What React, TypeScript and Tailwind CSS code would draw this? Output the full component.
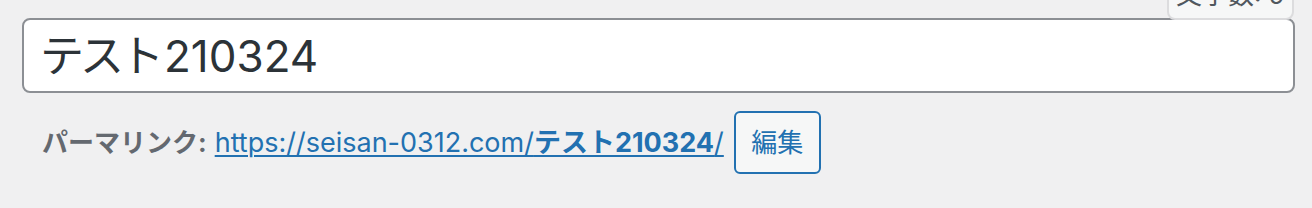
import React from 'react';

const App: React.FC = () => {
  return (
    <div
      className="w-[1312px] h-[208px] bg-[#f0f0f1] overflow-hidden"
      style={{ fontFamily: 'Inter, "Noto Sans CJK JP", sans-serif' }}
    >
      <div className="pl-[22px] pr-[17px] pt-[18px]">
        {/* Title */}
        <div className="relative">
          <div className="h-[75px] bg-white border-2 border-[#8c8f94] rounded-[8px] flex items-center px-[16px]">
            <span className="text-[44px] leading-none text-[#2c3338]">
              <span className="tracking-[-4px] pr-[4px]">テスト</span>210324
            </span>
          </div>
          <div className="absolute right-[1px] top-[-39px] z-10 h-[41px] px-[7px] bg-[#f6f7f7] border-2 border-[#dcdcde] rounded-[8px] flex items-end pb-[10px]">
            <span className="text-[26px] leading-none text-[#50575e]">文字数: 9</span>
          </div>
        </div>

        {/* Permalink */}
        <div className="flex items-center pl-[20px] pt-[18px] leading-none">
          <strong className="font-bold text-[26px] text-[#646970] mr-[8px]">パーマリンク:</strong>
          <a href="#" className="text-[27px] text-[#2271b1] underline underline-offset-[3px] decoration-[2px]">
            https://seisan-0312.com/<span className="font-bold">テスト210324</span>/
          </a>
          <button className="ml-[10px] h-[63px] w-[87px] flex items-center justify-center bg-[#f6f7f7] border-2 border-[#2271b1] rounded-[6px] text-[#2271b1] text-[26px] leading-none">
            編集
          </button>
        </div>
      </div>
    </div>
  );
};

export default App;
